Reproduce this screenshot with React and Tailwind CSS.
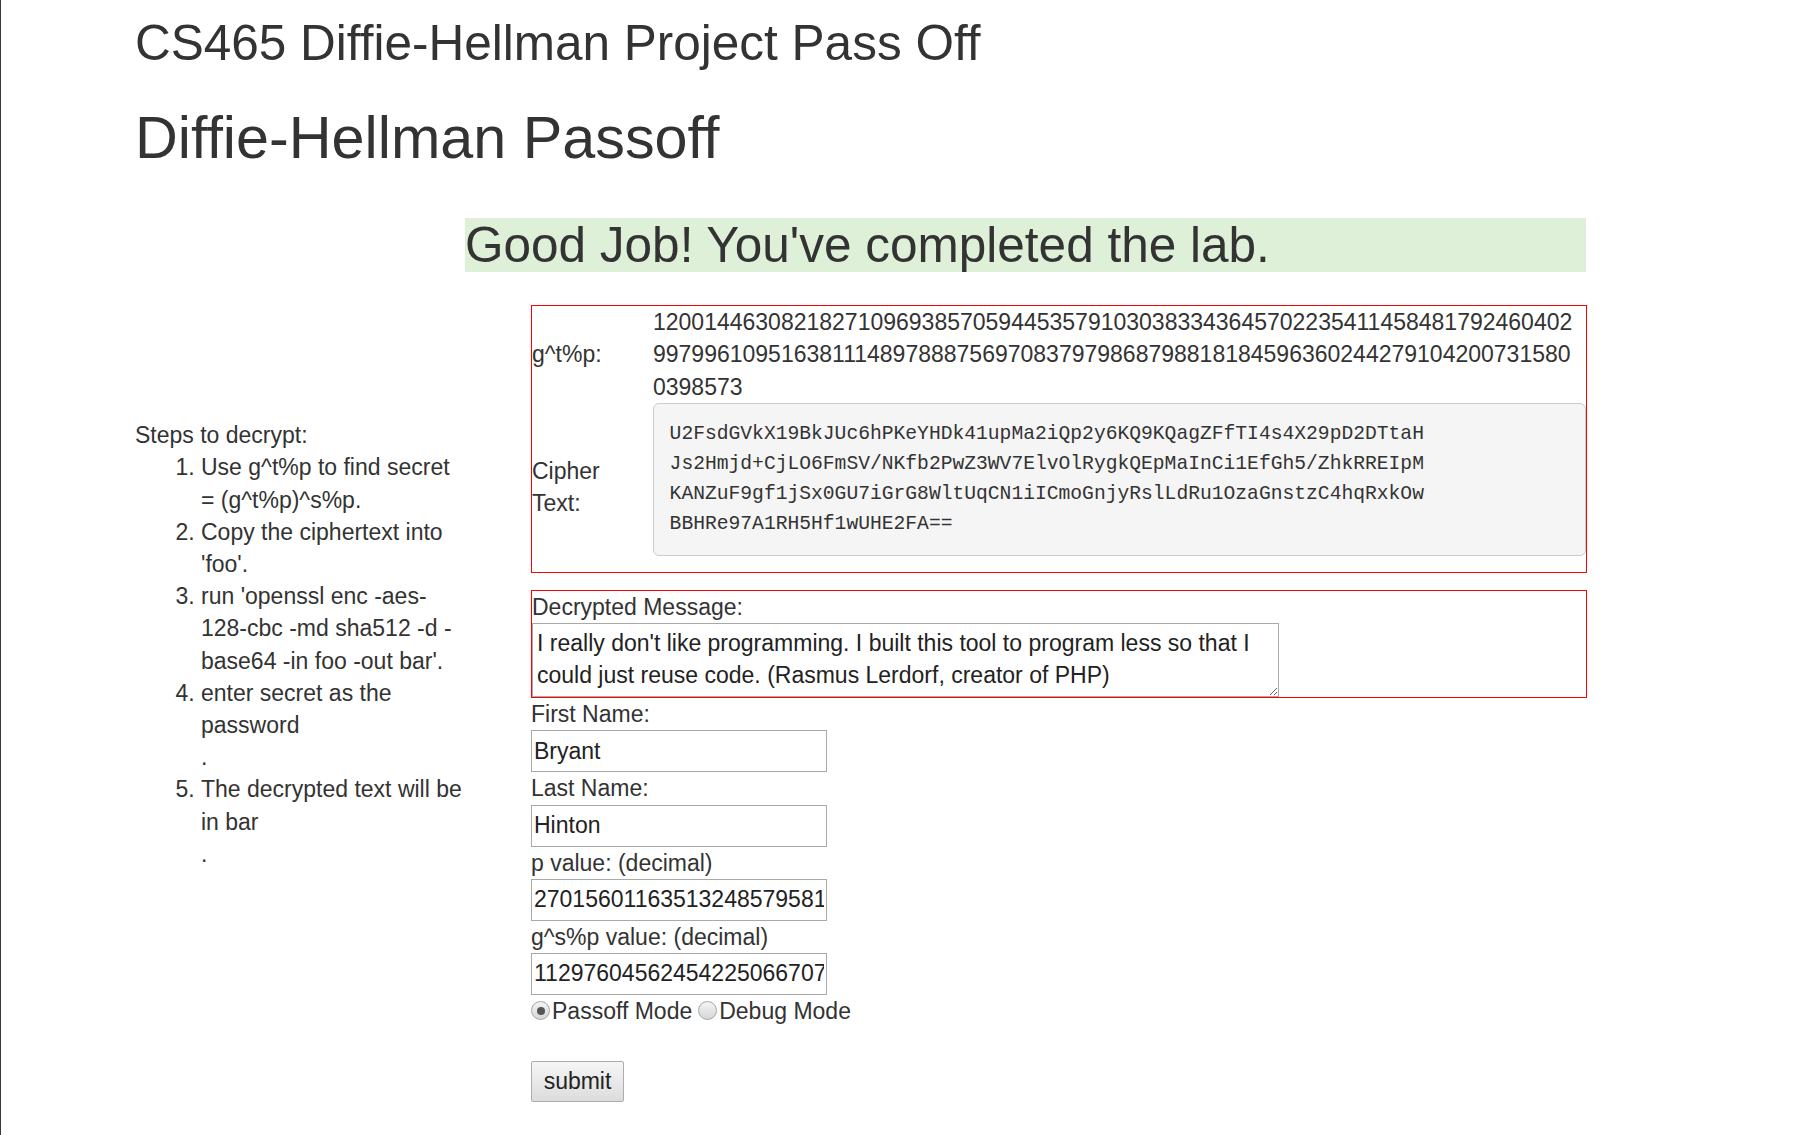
const gtp =
  "120014463082182710969385705944535791030383343645702235411458481792460402997996109516381114897888756970837979868798818184596360244279104200731580" +
  "0398573"

const cipherLines = [
  "U2FsdGVkX19BkJUc6hPKeYHDk41upMa2iQp2y6KQ9KQagZFfTI4s4X29pD2DTtaH",
  "Js2Hmjd+CjLO6FmSV/NKfb2PwZ3WV7ElvOlRygkQEpMaInCi1EfGh5/ZhkRREIpM",
  "KANZuF9gf1jSx0GU7iGrG8WltUqCN1iICmoGnjyRslLdRu1OzaGnstzC4hqRxkOw",
  "BBHRe97A1RH5Hf1wUHE2FA==",
]

const fields = [
  { label: "First Name:", value: "Bryant" },
  { label: "Last Name:", value: "Hinton" },
  { label: "p value: (decimal)", value: "27015601163513248579581" },
  { label: "g^s%p value: (decimal)", value: "11297604562454225066707" },
]

function Radio({ checked, label }) {
  return (
    <label className="inline-flex items-center">
      <span className="w-[19px] h-[19px] rounded-full border border-[#a6a6a6] bg-linear-to-b from-[#f4f4f4] to-[#d6d6d6] flex items-center justify-center">
        {checked && <span className="w-[8px] h-[8px] rounded-full bg-[#555]" />}
      </span>
      <span className="ml-[2px]">{label}</span>
    </label>
  )
}

export default function App() {
  return (
    <div className="min-h-screen border-l border-[#3a3a3a] bg-white text-[#333] text-[23px] leading-[32.2px] font-['Liberation_Sans',Arial,sans-serif]">
      <div className="pl-[134px] pt-[16px]">
        <h2 className="text-[49.5px] leading-[1.1]">CS465 Diffie-Hellman Project Pass Off</h2>
        <h1 className="mt-[35px] text-[59.3px] leading-[1.1]">Diffie-Hellman Passoff</h1>

        <h2 className="mt-[47px] ml-[330px] w-[1121px] bg-[#dff0d8] text-[49.5px] leading-[1.1]">
          Good Job! You've completed the lab.
        </h2>

        <div className="mt-[33px] flex">
          <div className="w-[396px] pt-[114px]">
            <div>Steps to decrypt:</div>
            <ol className="list-decimal pl-[66px] w-[331px]">
              <li>Use g^t%p to find secret = (g^t%p)^s%p.</li>
              <li>Copy the ciphertext into 'foo'.</li>
              <li>run 'openssl enc -aes-128-cbc -md sha512 -d -base64 -in foo -out bar'.</li>
              <li>
                enter secret as the password
                <br />.
              </li>
              <li>
                The decrypted text will be in bar
                <br />.
              </li>
            </ol>
          </div>

          <div className="w-[1056px]">
            <div className="border border-[#ff0000]">
              <table className="w-full table-fixed">
                <colgroup>
                  <col className="w-[121px]" />
                  <col />
                </colgroup>
                <tbody>
                  <tr>
                    <td className="align-middle">g^t%p:</td>
                    <td className="align-middle">
                      <div className="w-[925px] break-all">{gtp}</div>
                    </td>
                  </tr>
                  <tr>
                    <td className="align-middle">Cipher Text:</td>
                    <td className="align-middle">
                      <pre className="mb-[16px] p-[15.6px] bg-[#f5f5f5] border border-[#cccccc] rounded-[6px] text-[19.65px] leading-[30px] text-[#333] font-['Liberation_Mono','DejaVu_Sans_Mono',monospace]">
                        {cipherLines.join("\n")}
                      </pre>
                    </td>
                  </tr>
                </tbody>
              </table>
            </div>

            <div className="mt-[17px] border border-[#ff0000]">
              <div>Decrypted Message:</div>
              <textarea
                readOnly
                value="I really don't like programming. I built this tool to program less so that I could just reuse code. (Rasmus Lerdorf, creator of PHP)"
                className="block w-[747px] h-[74px] border border-[#a9a9a9] px-[4px] py-[3px] text-[23px] leading-[32.2px] text-[#222] outline-none overflow-hidden"
              />
            </div>

            {fields.map((f) => (
              <div key={f.label}>
                <div>{f.label}</div>
                <input
                  readOnly
                  value={f.value}
                  className="block w-[296px] h-[42px] border border-[#a9a9a9] px-[2px] text-[23px] text-[#222] outline-none"
                />
              </div>
            ))}

            <div className="flex items-center gap-[6px] h-[32px]">
              <Radio checked label="Passoff Mode" />
              <Radio label="Debug Mode" />
            </div>

            <button className="mt-[34px] w-[93px] h-[41px] border border-[#adadad] rounded-[2px] bg-linear-to-b from-[#f6f6f6] to-[#dcdcdc] text-[23px] text-[#222]">
              submit
            </button>
          </div>
        </div>
      </div>
    </div>
  )
}
